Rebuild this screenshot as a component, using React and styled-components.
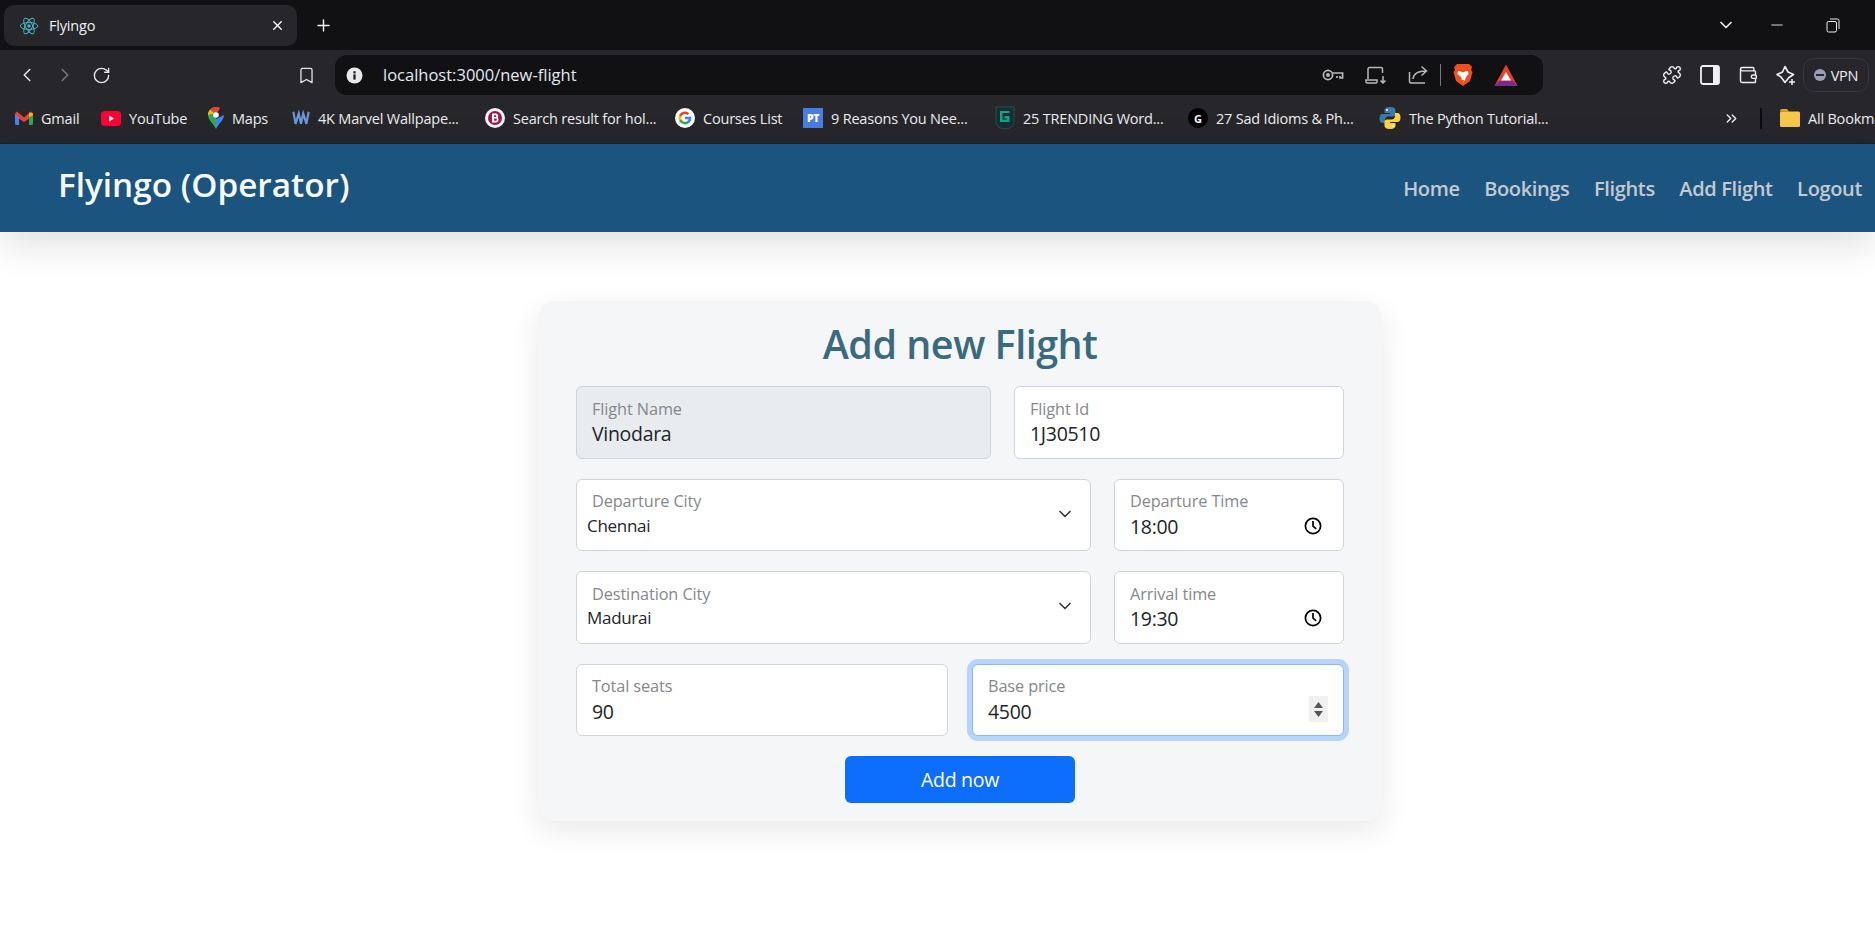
import React from 'react';
import styled, { createGlobalStyle } from 'styled-components';
import { ChevronLeft, ChevronRight, RotateCw, Bookmark, X, Plus, ChevronDown, Minus, ChevronsRight, Puzzle, Wallet } from 'lucide-react';

const Global = createGlobalStyle`
  html, body { margin: 0; padding: 0; background: #fff; }
  body { font-family: "Open Sans", "Noto Sans", sans-serif; }
  * { box-sizing: border-box; }
`;
const Page = styled.div`width: 1875px; height: 926px; overflow: hidden; background: #fff; display: flex; flex-direction: column;`;

const TabStrip = styled.div`height: 50px; background: #111113; display: flex; align-items: flex-start; padding: 5px 0 0 4px; color: #fff;`;
const Tab = styled.div`width: 293px; height: 41px; background: #26262b; border-radius: 10px; display: flex; align-items: center; padding: 0 12px 0 15px; gap: 10px;`;
const TabTitle = styled.span`flex: 1; font-size: 14.5px; letter-spacing: -0.2px; color: #f1f1f3;`;
const NewTab = styled.div`width: 52px; height: 41px; display: flex; align-items: center; justify-content: center; color: #f1f1f3;`;
const WindowControls = styled.div`margin-left: auto; height: 40px; display: flex; align-items: center; color: #eee; padding-right: 35px; gap: 32px;`;
const RestoreWrap = styled.div`display: flex; margin-left: 8px;`;

const Toolbar = styled.div`height: 45px; background: #26262b; display: flex; align-items: flex-start; padding-top: 5px; color: #e6e6ea;`;
const NavIcons = styled.div`width: 335px; height: 40px; display: flex; align-items: center; padding-left: 16px; gap: 16px;`;
const UrlBar = styled.div`width: 1208px; height: 40px; background: #111113; border-radius: 12px; display: flex; align-items: center; padding: 0 25px 0 11px; color: #e6e6ea;`;
const UrlText = styled.span`margin-left: 20px; margin-top: -2px; flex: 1; font-size: 16.5px; color: #e4e8f0;`;
const UrlActions = styled.div`display: flex; align-items: center; gap: 21px;`;
const Separator = styled.div`width: 1px; height: 22px; background: #77777c; margin: 0 -9px 0 -9px;`;
const ExtIcons = styled.div`display: flex; align-items: center; height: 40px; margin-left: 119px; gap: 18px;`;
const VpnPill = styled.div`margin-left: 7px; width: 66px; height: 34px; margin-top: 3px; border: 1px solid #36363c; border-radius: 11px; display: flex; align-items: center; justify-content: center; gap: 5px; font-size: 14.5px; letter-spacing: -0.2px; color: #eceef2;`;
const VpnDot = styled.span`width: 12px; height: 12px; border-radius: 50%; background: #9a9db8; display: flex; align-items: center; justify-content: center; &::after { content: ""; width: 8px; height: 2px; background: #26262b; }`;

const BookmarksBar = styled.div`height: 49px; background: #26262b; border-bottom: 1px solid #1f2024; display: flex; align-items: center; padding: 0 0 2px 15px; color: #ececf0; white-space: nowrap; overflow: hidden;`;
const BookmarkItem = styled.div`display: flex; align-items: center; gap: 8px; margin-right: ${p => p.$gap}px; flex: none;`;
const BookmarkLabel = styled.span`font-size: 14.5px; letter-spacing: -0.2px; width: ${p => p.$w}px; display: block;`;
const BarDivider = styled.div`width: 2px; height: 21px; background: #0c0c0e; margin: 0 18px 0 20px; flex: none;`;

const NavBar = styled.header`position: relative; z-index: 1; height: 88px; background: #1c5480; display: flex; align-items: center; justify-content: space-between; padding: 0 13px 0 58px; box-shadow: 0 10px 40px rgba(0,0,0,.14);`;
const Brand = styled.div`color: #f6f9fc; font-size: 33.3px; font-weight: 600; margin-top: -8px;`;
const NavLinks = styled.nav`display: flex; gap: 24.5px; margin-top: 1px;`;
const NavLink = styled.a`color: #c2c9d1; font-size: 20px; font-weight: 600; letter-spacing: -0.35px; white-space: nowrap;`;

const Card = styled.main`width: 844px; height: 520px; margin: 69px 0 0 538px; padding: 12px 38px 18px; background: #f5f6f8; border-radius: 17px; box-shadow: 0 10px 30px rgba(0,0,0,.09); display: flex; flex-direction: column; gap: 20px;`;
const Title = styled.h1`margin: 0 0 -7px; height: 60px; line-height: 62px; text-align: center; font-size: 39.5px; font-weight: 600; letter-spacing: -0.5px; color: #396a80;`;
const Row = styled.div`display: flex; justify-content: space-between; height: 72.5px; flex: none;`;
const Field = styled.div`position: relative; width: ${p => p.$w}px; height: 100%; padding: 10.5px 15px 0; border: 1px solid ${p => p.$focus ? '#86b7fe' : '#cfd4dc'}; border-radius: 6px; background: ${p => p.$disabled ? '#e9ecef' : '#fff'}; ${p => p.$focus ? 'box-shadow: 0 0 0 5px #b9d4fb;' : ''} display: flex; flex-direction: column; justify-content: flex-start;`;
const Label = styled.label`font-size: 16.3px; line-height: 23px; margin-bottom: 0.5px; letter-spacing: -0.1px; color: #85888c;`;
const Value = styled.div`font-size: 19.5px; line-height: 25px; letter-spacing: -0.3px; color: #212529; ${p => p.$select ? 'font-size: 17px; margin-left: -5px; margin-top: -1px;' : ''}`;
const TrailingIcon = styled.div`position: absolute; right: ${p => p.$r}px; top: ${p => p.$t}px; display: flex; color: #212529;`;
const Spinner = styled.div`position: absolute; right: 15px; top: 31px; width: 19px; height: 26px; background: #f0f0f0; display: flex; align-items: center; justify-content: center;`;
const SubmitRow = styled.div`display: flex; justify-content: center;`;
const Submit = styled.button`width: 230px; height: 47px; border: none; border-radius: 6px; background: #0d6efd; color: #fff; font: 500 19.5px "Open Sans", sans-serif; letter-spacing: -0.3px;`;

const ReactIcon = () => (
  <svg width="20" height="20" viewBox="-12 -12 24 24" fill="none" stroke="#4fb5c9" strokeWidth="1.1">
    <circle r="2" fill="#4fb5c9" stroke="none" />
    <ellipse rx="10.5" ry="4.2" /><ellipse rx="10.5" ry="4.2" transform="rotate(60)" /><ellipse rx="10.5" ry="4.2" transform="rotate(120)" />
  </svg>
);
const RestoreIcon = () => (
  <svg width="14" height="15" viewBox="0 0 14 15" fill="none" stroke="#eee" strokeWidth="1"><rect x="1" y="3.5" width="9.5" height="10.5" rx="1.5" /><path d="M4 1h7.5A1.5 1.5 0 0 1 13 2.5V11" /></svg>
);
const InfoIcon = () => (
  <svg width="17" height="17" viewBox="0 0 17 17"><circle cx="8.5" cy="8.5" r="8" fill="#e9e9ec" /><rect x="7.4" y="7.4" width="2.2" height="5.2" fill="#1a1a1c" /><rect x="7.4" y="4.2" width="2.2" height="2.2" fill="#1a1a1c" /></svg>
);
const KeyIcon = () => (
  <svg width="22" height="14" viewBox="0 0 22 14" fill="none" stroke="#b8b8bd" strokeWidth="1.7"><circle cx="6" cy="7" r="4.6" /><circle cx="6" cy="7" r="1.2" /><path d="M10.6 5h10v5h-2.6V8m-3 0v2" /></svg>
);
const CastIcon = () => (
  <svg width="22" height="19" viewBox="0 0 22 19" fill="none" stroke="#b8b8bd" strokeWidth="1.5"><path d="M3 13V3a1.5 1.5 0 0 1 1.5-1.5H16A1.5 1.5 0 0 1 17.5 3v4" /><path d="M1 14h11v2a1 1 0 0 1-1 1H2a1 1 0 0 1-1-1z" /><path d="M18 10v7m-2.5-2.5L18 17l2.5-2.5" /></svg>
);
const ShareIcon = () => (
  <svg width="20" height="20" viewBox="0 0 20 20" fill="none" stroke="#b8b8bd" strokeWidth="1.5"><path d="M1.5 7v9.5A1.5 1.5 0 0 0 3 18h14" /><path d="M5 14c.5-5 4-8 13-8M13.5 1.5 18.5 6l-5 4.500" /></svg>
);
const BraveIcon = () => (
  <svg width="20" height="24" viewBox="0 0 20 24"><path d="M4 1h12l3 3-1 3 1.500 2-2.500 9-7 5-7-5L.5 9 2 7 1 4z" fill="#f1501e" /><path d="M5 8l3 .500 2 1 2-1 3-.500 .5 3-2.500 3-1 3-1.500 2-1.500-2-1-3L4.500 11z" fill="#fff" /><path d="M8.500 17h3l-1.500 2z" fill="#f1501e" /></svg>
);
const BatIcon = () => (
  <svg width="24" height="24" viewBox="0 0 24 24"><path d="M12 1.500 23.500 23H.5z" fill="#e8432a" /><path d="M.5 23h23l-5-5.500H5.500z" fill="#7a2a8c" /><path d="M12 9l5 8.500H7z" fill="#fff" /></svg>
);
const SidebarIcon = () => (
  <svg width="20" height="20" viewBox="0 0 20 20"><rect x="1" y="1" width="18" height="18" rx="2" fill="none" stroke="#f0f0f2" strokeWidth="1.8" /><rect x="13" y="1" width="6" height="18" fill="#f0f0f2" /></svg>
);
const LeoIcon = () => (
  <svg width="20" height="21" viewBox="0 0 20 21" fill="none" stroke="#f0f0f2" strokeWidth="1.6"><path d="M9 1.500 12 7l5.500 2.500-4.500 3-4 5-4-5.500L1 9.500 6.500 7z" strokeLinejoin="round" /><path d="M16 14v6m-3-3h6" strokeWidth="1.500" /></svg>
);
const GmailIcon = () => (
  <svg width="18" height="14" viewBox="0 0 18 14"><path d="M0 2.500 2 .5l7 6 7-6 2 2V5L9 11 0 5z" fill="#ea4335" /><path d="M0 4v8.500A1.500 1.500 0 0 0 1.500 14H4V6z" fill="#4285f4" /><path d="M18 4v8.500a1.500 1.500 0 0 1-1.500 1.500H14V6z" fill="#34a853" /><path d="M14 1.500V6l4-2V2.500z" fill="#fbbc04" /></svg>
);
const YoutubeIcon = () => (
  <svg width="20" height="15" viewBox="0 0 20 15"><rect width="20" height="15" rx="3.500" fill="#ff0033" /><path d="M8 4.500 13 7.500 8 10.500z" fill="#fff" /></svg>
);
const MapsIcon = () => (
  <svg width="16" height="22" viewBox="0 0 16 22"><path d="M8 22C5 16 0 13 0 8a8 8 0 0 1 8-8z" fill="#34a853" /><path d="M8 22c3-6 8-9 8-14L8 12z" fill="#4285f4" /><path d="M2 2.500A8 8 0 0 1 12 .9L8 8z" fill="#ea4335" /><path d="M0 8a8 8 0 0 1 2-5.500L6 6z" fill="#fbbc04" /><circle cx="8" cy="8" r="2.800" fill="#fff" /></svg>
);
const WmIcon = () => (
  <svg width="18" height="16" viewBox="0 0 20 16" fill="none" stroke="#6c97d8" strokeWidth="2.400"><path d="M1.500 1 4 14.500 7.500 3 10 14.500 12.500 3 16 14.500 18.500 1" /></svg>
);
const BIcon = () => (
  <svg width="20" height="20" viewBox="0 0 20 20"><circle cx="10" cy="10" r="10" fill="#f4f4f4" /><circle cx="10" cy="10" r="7" fill="#9b1b50" /><path d="M7 5.500h4a2.500 2.500 0 0 1 1.500 4.300 2.600 2.600 0 0 1-1.300 4.700H7zM9 7.300V9h1.500a.85.85 0 0 0 0-1.700zm0 3.300v2.100h1.800a1.050 1.050 0 0 0 0-2.100z" fill="#fff" fillRule="evenodd" /></svg>
);
const GoogleIcon = () => (
  <svg width="20" height="20" viewBox="0 0 20 20"><circle cx="10" cy="10" r="10" fill="#fff" /><g transform="translate(3.500 3.500) scale(.27)"><path d="M47.500 24.500c0-1.600-.1-3.200-.4-4.700H24v9h13.200c-.6 3-2.300 5.600-4.900 7.300v6h7.900c4.600-4.300 7.300-10.500 7.300-17.600z" fill="#4285f4" /><path d="M24 48c6.500 0 12-2.100 16-5.900l-7.900-6c-2.200 1.500-5 2.300-8.100 2.300-6.300 0-11.600-4.200-13.500-9.900H2.400v6.200C6.400 42.600 14.600 48 24 48z" fill="#34a853" /><path d="M10.500 28.500c-1-3-1-6.100 0-9.100v-6.200H2.400a24 24 0 0 0 0 21.500z" fill="#fbbc04" /><path d="M24 9.600c3.500 0 6.700 1.200 9.200 3.600l6.900-6.900A23.100 23.100 0 0 0 24 0C14.600 0 6.400 5.400 2.400 13.300l8.100 6.200C12.400 13.800 17.700 9.600 24 9.600z" fill="#ea4335" /></g></svg>
);
const SquareBadge = styled.span`width: 20px; height: 20px; background: #4a7de2; color: #fff; font-size: 10.500px; font-weight: 800; display: flex; align-items: center; justify-content: center; letter-spacing: -0.5px;`;
const ShieldIcon = () => (
  <svg width="20" height="24" viewBox="0 0 20 24"><path d="M1 1h18v15a9 7 0 0 1-18 0z" fill="#172c33" stroke="#25505a" strokeWidth="1" /><path d="M14.500 5H5v11h9.500v-6H9.500v2.500h2.200v1.200H7.500V7h7z" fill="#12a584" /></svg>
);
const RoundBadge = styled.span`width: 20px; height: 20px; border-radius: 50%; background: #000; color: #fff; font-size: 11px; font-weight: 700; display: flex; align-items: center; justify-content: center;`;
const PythonIcon = () => (
  <svg width="22" height="24" viewBox="0 0 22 24"><path d="M11 1c-4 0-5.500 1.200-5.500 3.500V7H11v1H3.500C1.500 8 .5 10 .5 12.500S1.500 17 3.500 17H6v-3c0-2 1.500-3.500 3.500-3.500h4.500c1.600 0 2.500-1 2.500-2.500V4.500C16.500 2.200 15 1 11 1z" fill="#3a7bab" /><path d="M11 23c4 0 5.500-1.200 5.500-3.500V17H11v-1h7.500c2 0 3-2 3-4.500S20.500 7 18.500 7H16v3c0 2-1.500 3.500-3.500 3.500H8C6.400 13.500 5.500 14.500 5.500 16v3.500C5.500 21.800 7 23 11 23z" fill="#fdd440" /><circle cx="8" cy="4" r="1" fill="#fff" /><circle cx="14" cy="20" r="1" fill="#fff" /></svg>
);
const FolderIcon = () => (
  <svg width="20" height="18" viewBox="0 0 20 18"><path d="M0 2a2 2 0 0 1 2-2h5l2 2.500H0z" fill="#d9a520" /><rect y="2.500" width="20" height="15.500" rx="1.500" fill="#f5c84c" /></svg>
);
const ClockIcon = () => (
  <svg width="18" height="18" viewBox="0 0 18 18" fill="none" stroke="#000" strokeWidth="1.700"><circle cx="9" cy="9" r="7.600" /><path d="M9 4v5.200l3.200 2.600" /></svg>
);
const SpinArrows = () => (
  <svg width="13" height="18" viewBox="0 0 13 18" fill="#555"><path d="M6.500 2 11 8H2z" /><path d="M2 11h9l-4.500 6z" /></svg>
);

const bookmarks = [
  { icon: <GmailIcon />, text: 'Gmail', w: 38, gap: 22 },
  { icon: <YoutubeIcon />, text: 'YouTube', w: 59, gap: 20 },
  { icon: <MapsIcon />, text: 'Maps', w: 36, gap: 24 },
  { icon: <WmIcon />, text: '4K Marvel Wallpape...', w: 146, gap: 21 },
  { icon: <BIcon />, text: 'Search result for hol...', w: 144, gap: 18 },
  { icon: <GoogleIcon />, text: 'Courses List', w: 81, gap: 19 },
  { icon: <SquareBadge>PT</SquareBadge>, text: '9 Reasons You Nee...', w: 147, gap: 17 },
  { icon: <ShieldIcon />, text: '25 TRENDING Word...', w: 144, gap: 21 },
  { icon: <RoundBadge>G</RoundBadge>, text: '27 Sad Idioms & Ph...', w: 141, gap: 22 },
  { icon: <PythonIcon />, text: 'The Python Tutorial...', w: 142, gap: 173 },
];

const fields = [
  [{ label: 'Flight Name', value: 'Vinodara', w: 415, disabled: true }, { label: 'Flight Id', value: '1J30510', w: 330 }],
  [{ label: 'Departure City', value: 'Chennai', w: 515, select: true }, { label: 'Departure Time', value: '18:00', w: 230, time: true }],
  [{ label: 'Destination City', value: 'Madurai', w: 515, select: true }, { label: 'Arrival time', value: '19:30', w: 230, time: true }],
  [{ label: 'Total seats', value: '90', w: 372 }, { label: 'Base price', value: '4500', w: 372, focus: true }],
];

export default function App() {
  return (
    <Page>
      <Global />
      <TabStrip>
        <Tab>
          <ReactIcon />
          <TabTitle>Flyingo</TabTitle>
          <X size={15} strokeWidth={2.2} />
        </Tab>
        <NewTab><Plus size={19} strokeWidth={1.8} /></NewTab>
        <WindowControls>
          <ChevronDown size={20} strokeWidth={2} />
          <Minus size={18} strokeWidth={1.2} />
          <RestoreWrap><RestoreIcon /></RestoreWrap>
        </WindowControls>
      </TabStrip>
      <Toolbar>
        <NavIcons>
          <ChevronLeft size={22} strokeWidth={1.7} />
          <ChevronRight size={22} strokeWidth={1.7} color="#77777c" />
          <RotateCw size={19} strokeWidth={1.8} />
          <Bookmark size={19} strokeWidth={1.6} style={{ marginLeft: 170 }} />
        </NavIcons>
        <UrlBar>
          <InfoIcon />
          <UrlText>localhost:3000/new-flight</UrlText>
          <UrlActions>
            <KeyIcon />
            <CastIcon />
            <ShareIcon />
            <Separator />
            <BraveIcon />
            <BatIcon />
          </UrlActions>
        </UrlBar>
        <ExtIcons>
          <Puzzle size={20} strokeWidth={1.7} color="#f0f0f2" />
          <SidebarIcon />
          <Wallet size={20} strokeWidth={1.7} color="#f0f0f2" />
          <LeoIcon />
        </ExtIcons>
        <VpnPill><VpnDot />VPN</VpnPill>
      </Toolbar>
      <BookmarksBar>
        {bookmarks.map(b => (
          <BookmarkItem key={b.text} $gap={b.gap}>
            {b.icon}
            <BookmarkLabel $w={b.w}>{b.text}</BookmarkLabel>
          </BookmarkItem>
        ))}
        <ChevronsRight size={17} style={{ flex: 'none', marginLeft: -1 }} />
        <BarDivider />
        <BookmarkItem $gap={0}><FolderIcon /><BookmarkLabel>All Bookmarks</BookmarkLabel></BookmarkItem>
      </BookmarksBar>
      <NavBar>
        <Brand>Flyingo (Operator)</Brand>
        <NavLinks>
          {['Home', 'Bookings', 'Flights', 'Add Flight', 'Logout'].map(l => <NavLink key={l}>{l}</NavLink>)}
        </NavLinks>
      </NavBar>
      <Card>
        <Title>Add new Flight</Title>
        {fields.map((row, i) => (
          <Row key={i}>
            {row.map(f => (
              <Field key={f.label} $w={f.w} $disabled={f.disabled} $focus={f.focus}>
                <Label>{f.label}</Label>
                <Value $select={f.select}>{f.value}</Value>
                {f.select && <TrailingIcon $r={15} $t={24}><ChevronDown size={20} strokeWidth={2} color="#343a40" /></TrailingIcon>}
                {f.time && <TrailingIcon $r={21} $t={37}><ClockIcon /></TrailingIcon>}
                {f.focus && <Spinner><SpinArrows /></Spinner>}
              </Field>
            ))}
          </Row>
        ))}
        <SubmitRow><Submit>Add now</Submit></SubmitRow>
      </Card>
    </Page>
  );
}
